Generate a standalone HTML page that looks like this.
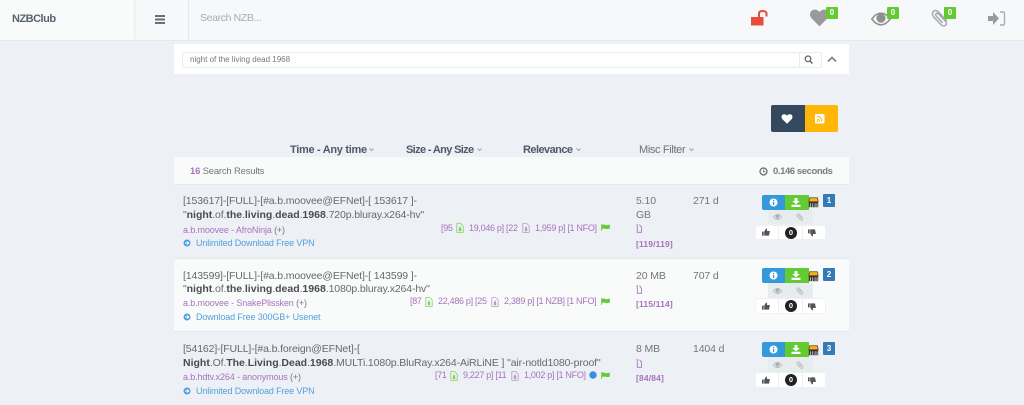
<!DOCTYPE html>
<html><head><meta charset="utf-8"><title>NZBClub</title>
<style>
html,body{margin:0;padding:0}
body{width:1024px;height:405px;overflow:hidden;background:#edf0f4;position:relative;font-family:"Liberation Sans",sans-serif;color:#676a6c;font-size:11px}
.a{position:absolute;white-space:nowrap}
.t{position:absolute;white-space:nowrap;line-height:14px}
.p{color:#a774bd}.b{color:#54a0dc}
.title{font-size:10.500px;letter-spacing:-.13px;color:#676a6c}
.title b{color:#4a4d50;letter-spacing:0}
.sm{font-size:9px;letter-spacing:-.13px}
.st{font-size:9px;letter-spacing:-.3px;color:#a774bd}
.num{font-size:8.500px;font-weight:bold;color:#a774bd;letter-spacing:.15px}
svg{position:absolute;display:block}
.fh{font-size:11px;font-weight:bold;color:#4f5a68;top:143px}
.sep{position:absolute;width:1px;background:#eceef1}
</style></head><body>
<svg width="0" height="0" style="position:absolute"><defs>
<symbol id="heart" viewBox="0 0 24 22"><path d="M12 21.500 2 11.500C-1 8-.5 3.500 2.500 1.500 5.500-.3 9.500.3 12 3.500 14.500.3 18.500-.3 21.500 1.500 24.500 3.500 25 8 22 11.500Z" fill="currentColor"/></symbol>
<symbol id="eye" viewBox="0 0 24 16"><path d="M1 8C5 2.500 9 1 12 1s7 1.500 11 7c-4 5.500-8 7-11 7S5 13.500 1 8Z" fill="none" stroke="currentColor" stroke-width="1.800"/><circle cx="12" cy="7" r="5.500" fill="currentColor"/></symbol>
<symbol id="clip" viewBox="0 0 24 24"><path d="M21 16 10 4C7.500 1.500 4.500 1.500 3 3.500 1.500 5 1.500 8 3.500 10.500L14 21.500C15.500 23 18 23 19.500 21.500 21 20 21 18 19.500 16.500L10 6.500C9 5.500 7.500 5.500 6.800 6.300 6 7 6 8.500 7 9.500L15.500 18.500" fill="none" stroke="currentColor" stroke-width="2"/></symbol>
<symbol id="dl" viewBox="0 0 12 12"><path d="M4 0H8V4H11L6 8.500 1 4H4ZM0 9H12V12H0Z" fill="#fff"/></symbol>
<symbol id="tu" viewBox="0 0 12 11"><path d="M0 5H2.500V11H0ZM3.300 5 6 .5C7.500 0 8 1.500 7.300 4H11C12 4 12 5 11.500 6L10.500 10.500C10.300 11 10 11 9.500 11H3.300Z" fill="currentColor"/></symbol>
<symbol id="file" viewBox="0 0 10 12"><path d="M1 .5H6L9 3.500V11.500H1Z" fill="none" stroke="currentColor" stroke-width="1"/><path d="M3.500 6.500 5 3.500 6.500 6.500V10H3.500Z" fill="currentColor"/></symbol>
<symbol id="flag" viewBox="0 0 11 9"><path d="M0 0H1V9H0ZM1 1C3.500-.3 5.500 2 8 1.500 9 1.300 10 1 11 .5V6C8 7.500 4.500 5 1 6.500Z" fill="#62cb31"/></symbol>
<symbol id="doc" viewBox="0 0 7 10"><path d="M.5.500H1.500V9.500H6.500V3.500L4 .500" fill="none" stroke="#a774bd" stroke-width="1"/></symbol>
<symbol id="box" viewBox="0 0 14 14"><path d="M2 1H12L13 6H1Z" fill="#f6b01e" stroke="#5a4a20" stroke-width="1"/><path d="M1 6H13V13H1Z" fill="#333"/><path d="M3 8V13M6 8V13M9 8V13M11.500 8V13" stroke="#ddd" stroke-width="1"/></symbol>
</defs></svg>

<!-- header -->
<div class="a" style="left:0;top:0;width:1024px;height:40px;background:#f7f8f9;border-bottom:1px solid #e6e8ea"></div>
<div class="a" style="left:0;top:0;width:134px;height:39px;background:#f9fbfb;border-right:1px solid #eceef0"></div>
<div class="a" style="left:188px;top:0;width:1px;height:40px;background:#e6e8ea"></div>
<div class="a" style="left:135px;top:0;width:1px;height:40px;background:#f1f3f4"></div>
<div class="t" style="left:12px;top:12px;font-size:11px;font-weight:bold;color:#5a6270;letter-spacing:-.5px">NZBClub</div>
<svg style="left:155px;top:15px" width="10" height="9"><path d="M0 0H10V2H0ZM0 3.500H10V5.500H0ZM0 7H10V9H0Z" fill="#6b6e72"/></svg>
<div class="t" style="left:200px;top:11px;font-size:10.500px;color:#a9abae;letter-spacing:-.37px">Search NZB...</div>

<svg style="left:750px;top:9px" width="20" height="17"><rect x="1" y="8" width="12.500" height="8.500" fill="#e74c3c"/><path d="M9 8V4.500C9 2.800 10.500 2 12.500 2S16.500 2.800 16.500 4.500V7.500" fill="none" stroke="#e74c3c" stroke-width="2"/></svg>
<svg style="left:810px;top:9px;color:#9a9a9a" width="19" height="18"><use href="#heart"/></svg>
<div class="a" style="left:826px;top:7px;width:12px;height:12px;background:#62cb31;border-radius:1px;color:#fff;font-size:8px;font-weight:bold;line-height:12px;text-align:center">0</div>
<svg style="left:871px;top:12px;color:#8f8f8f" width="20" height="14"><use href="#eye"/></svg>
<div class="a" style="left:887px;top:7px;width:12px;height:12px;background:#62cb31;border-radius:1px;color:#fff;font-size:8px;font-weight:bold;line-height:12px;text-align:center">0</div>
<svg style="left:931px;top:9px;color:#a5a8ab" width="18" height="18"><use href="#clip"/></svg>
<div class="a" style="left:944px;top:7px;width:12px;height:12px;background:#62cb31;border-radius:1px;color:#fff;font-size:8px;font-weight:bold;line-height:12px;text-align:center">0</div>
<svg style="left:988px;top:11px" width="18" height="15"><path d="M0 5H5V1L11 7.500 5 14V10H0Z" fill="#9a9a9a"/><path d="M12 1H15C16.200 1 16.500 2 16.500 3V12C16.500 13 16.200 14 15 14H12" fill="none" stroke="#a9acb0" stroke-width="1.400"/></svg>

<!-- search panel -->
<div class="a" style="left:174px;top:44px;width:675px;height:30px;background:#fff"></div>
<div class="a" style="left:182px;top:52px;width:616px;height:14px;border:1px solid #e9ebed;border-radius:2px;background:#fff"></div>
<div class="t" style="left:190px;top:53px;font-size:8px;color:#777">night of the living dead 1968</div>
<div class="a" style="left:799px;top:52px;width:21px;height:14px;border:1px solid #e9ebed;border-radius:2px;background:#fff"></div>
<svg style="left:804px;top:55px" width="10" height="9"><circle cx="4" cy="3.800" r="2.800" fill="none" stroke="#666" stroke-width="1.300"/><path d="M6 6 8.500 8.500" stroke="#666" stroke-width="1.500"/></svg>
<svg style="left:827px;top:56px" width="10" height="7"><path d="M1 5.500 5 1.500 9 5.500" fill="none" stroke="#888" stroke-width="1.800"/></svg>

<!-- action buttons -->
<div class="a" style="left:771px;top:105px;width:34px;height:27px;background:#34495e;border-radius:2px 0 0 2px"></div>
<div class="a" style="left:805px;top:105px;width:33px;height:27px;background:#ffb606;border-radius:0 2px 2px 0"></div>
<svg style="left:781px;top:114px;color:#fff" width="12" height="10"><use href="#heart"/></svg>
<svg style="left:815px;top:114px" width="10" height="10"><rect width="9.500" height="9.500" rx="1" fill="#fff"/><path d="M2 2.500C5 2.500 7 4.500 7 7.500M2 5C3.500 5 4.600 6 4.600 7.500" fill="none" stroke="#ffb606" stroke-width="1"/><circle cx="2.500" cy="7.200" r=".9" fill="#ffb606"/></svg>

<!-- filters -->
<div class="t fh" style="left:290px;letter-spacing:-.3px">Time - Any time</div>
<div class="t fh" style="left:406px;letter-spacing:-.65px">Size - Any Size</div>
<div class="t fh" style="left:523px;letter-spacing:-.55px">Relevance</div>
<div class="t" style="left:639px;top:143px;font-size:11px;color:#6e7278;letter-spacing:-.35px">Misc Filter</div>
<svg style="left:369px;top:148px" width="5" height="3"><path d="M.5.500 2.500 2.500 4.500.500" fill="none" stroke="#889" stroke-width=".8"/></svg>
<svg style="left:477px;top:148px" width="5" height="3"><path d="M.5.500 2.500 2.500 4.500.500" fill="none" stroke="#889" stroke-width=".8"/></svg>
<svg style="left:576px;top:148px" width="5" height="3"><path d="M.5.500 2.500 2.500 4.500.500" fill="none" stroke="#889" stroke-width=".8"/></svg>
<svg style="left:689px;top:148px" width="5" height="3"><path d="M.5.500 2.500 2.500 4.500.500" fill="none" stroke="#889" stroke-width=".8"/></svg>

<!-- results header -->
<div class="a" style="left:174px;top:157px;width:675px;height:28px;background:#f9fafa;border-bottom:1px solid #e6e8ea;box-sizing:border-box"></div>
<div class="t" style="left:190px;top:165px;font-size:9.500px;color:#777;letter-spacing:-.2px"><b style="color:#a774bd">16</b> Search Results</div>
<svg style="left:759px;top:167px" width="9" height="9"><circle cx="4.500" cy="4.500" r="3.500" fill="none" stroke="#666" stroke-width="1.200"/><path d="M4.500 2.500V4.800H6.500" fill="none" stroke="#666" stroke-width=".8"/></svg>
<div class="t" style="left:773px;top:165px;font-size:9.500px;font-weight:bold;color:#7a7d80;letter-spacing:-.42px">0.146 seconds</div>

<!-- rows -->
<div class="a" style="left:174px;top:185px;width:675px;height:74px;background:#edf0f4;border-bottom:1px solid #e4e6e9;box-sizing:border-box"></div>
<div class="a" style="left:174px;top:259px;width:675px;height:73px;background:#f9fafa;border-bottom:1px solid #e4e6e9;box-sizing:border-box"></div>
<div class="a" style="left:174px;top:332px;width:675px;height:73px;background:#edf0f4"></div>

<!-- row 1 -->
<div class="t title" style="left:183px;top:194px">[153617]-[FULL]-[#a.b.moovee@EFNet]-[ 153617 ]-</div>
<div class="t title" style="left:183px;top:208px">"<b>night</b>.of.<b>the</b>.<b>living</b>.<b>dead</b>.<b>1968</b>.720p.bluray.x264-hv"</div>
<div class="t sm p" style="left:183px;top:223px">a.b.moovee - AfroNinja <span style="color:#777">(+)</span></div>
<svg style="left:183px;top:239px" width="8" height="8"><circle cx="4" cy="4" r="3.500" fill="#54a0dc"/><path d="M2 4H5.500M4 2.500 5.800 4 4 5.500" fill="none" stroke="#fff" stroke-width="1"/></svg>
<div class="t sm b" style="left:196px;top:236px">Unlimited Download Free VPN</div>
<div class="t st" style="left:441px;top:221px">[95</div>
<svg style="left:456px;top:223px;color:#7fd35c" width="8" height="10"><use href="#file"/></svg>
<div class="t st" style="left:469px;top:221px">19,046 p] [22</div>
<svg style="left:522px;top:223px;color:#b79ac6" width="8" height="10"><use href="#file"/></svg>
<div class="t st" style="left:535px;top:221px">1,959 p] [1 NFO]</div>
<svg style="left:601px;top:224px" width="9" height="7"><use href="#flag"/></svg>
<div class="t title" style="left:636px;top:194px;color:#777">5.10</div>
<div class="t title" style="left:636px;top:208px;color:#777">GB</div>
<svg style="left:636px;top:224px" width="6" height="9"><use href="#doc"/></svg>
<div class="t num" style="left:636px;top:237px">[119/119]</div>
<div class="t title" style="left:693px;top:194px;color:#777">271 d</div>
<!-- controls 1 -->
<div class="a" style="left:762px;top:195px;width:23px;height:15px;background:#3498db;border-radius:2px 0 0 2px"></div>
<div class="a" style="left:785px;top:195px;width:24px;height:15px;background:#62cb31"></div>
<svg style="left:769px;top:198px" width="9" height="9"><circle cx="4.500" cy="4.500" r="4" fill="#fff"/><rect x="3.900" y="3.700" width="1.300" height="3.300" fill="#3498db"/><rect x="3.900" y="1.800" width="1.300" height="1.200" fill="#3498db"/></svg>
<svg style="left:791px;top:198px" width="10" height="9"><use href="#dl"/></svg>
<svg style="left:808px;top:196px" width="11" height="13"><use href="#box"/></svg>
<div class="a" style="left:823px;top:194px;width:12px;height:13px;background:#337ab7;border-radius:1px;color:#fff;font-size:8px;font-weight:bold;line-height:13px;text-align:center">1</div>
<div class="a" style="left:768px;top:210px;width:45px;height:14px;background:#e7ecef"></div>
<svg style="left:773px;top:214px;color:#b0b3b6" width="9" height="6"><use href="#eye"/></svg>
<svg style="left:796px;top:213px;color:#b5b8bb" width="8" height="8"><use href="#clip"/></svg>
<div class="a" style="left:756px;top:226px;width:69px;height:13px;background:#fff;border-radius:2px"></div>
<div class="sep" style="left:778px;top:226px;height:13px"></div><div class="sep" style="left:802px;top:226px;height:13px"></div>
<svg style="left:762px;top:228px;color:#555" width="8" height="8"><use href="#tu"/></svg>
<div class="a" style="left:785px;top:227px;width:12px;height:12px;background:#222;border-radius:50%;color:#fff;font-size:7.500px;font-weight:bold;line-height:12px;text-align:center">0</div>
<svg style="left:808px;top:229px;color:#555;transform:scale(1,-1)" width="8" height="8"><use href="#tu"/></svg>

<!-- row 2 -->
<div class="t title" style="left:183px;top:269px">[143599]-[FULL]-[#a.b.moovee@EFNet]-[ 143599 ]-</div>
<div class="t title" style="left:183px;top:282px">"<b>night</b>.of.<b>the</b>.<b>living</b>.<b>dead</b>.<b>1968</b>.1080p.bluray.x264-hv"</div>
<div class="t sm p" style="left:183px;top:296px">a.b.moovee - SnakePlissken <span style="color:#777">(+)</span></div>
<svg style="left:183px;top:313px" width="8" height="8"><circle cx="4" cy="4" r="3.500" fill="#54a0dc"/><path d="M2 4H5.500M4 2.500 5.800 4 4 5.500" fill="none" stroke="#fff" stroke-width="1"/></svg>
<div class="t sm b" style="left:196px;top:310px">Download Free 300GB+ Usenet</div>
<div class="t st" style="left:410px;top:294px">[87</div>
<svg style="left:425px;top:297px;color:#7fd35c" width="8" height="10"><use href="#file"/></svg>
<div class="t st" style="left:438px;top:294px">22,486 p] [25</div>
<svg style="left:491px;top:297px;color:#b79ac6" width="8" height="10"><use href="#file"/></svg>
<div class="t st" style="left:504px;top:294px">2,389 p] [1 NZB] [1 NFO]</div>
<svg style="left:601px;top:298px" width="9" height="7"><use href="#flag"/></svg>
<div class="t title" style="left:636px;top:269px;color:#777">20 MB</div>
<svg style="left:636px;top:285px" width="6" height="9"><use href="#doc"/></svg>
<div class="t num" style="left:636px;top:297px">[115/114]</div>
<div class="t title" style="left:693px;top:269px;color:#777">707 d</div>
<!-- controls 2 -->
<div class="a" style="left:762px;top:268px;width:23px;height:15px;background:#3498db;border-radius:2px 0 0 2px"></div>
<div class="a" style="left:785px;top:268px;width:24px;height:15px;background:#62cb31"></div>
<svg style="left:769px;top:271px" width="9" height="9"><circle cx="4.500" cy="4.500" r="4" fill="#fff"/><rect x="3.900" y="3.700" width="1.300" height="3.300" fill="#3498db"/><rect x="3.900" y="1.800" width="1.300" height="1.200" fill="#3498db"/></svg>
<svg style="left:791px;top:271px" width="10" height="9"><use href="#dl"/></svg>
<svg style="left:808px;top:270px" width="11" height="13"><use href="#box"/></svg>
<div class="a" style="left:823px;top:268px;width:12px;height:13px;background:#337ab7;border-radius:1px;color:#fff;font-size:8px;font-weight:bold;line-height:13px;text-align:center">2</div>
<div class="a" style="left:768px;top:283px;width:45px;height:15px;background:#e7ecef"></div>
<svg style="left:773px;top:288px;color:#b0b3b6" width="9" height="6"><use href="#eye"/></svg>
<svg style="left:796px;top:287px;color:#b5b8bb" width="8" height="8"><use href="#clip"/></svg>
<div class="a" style="left:756px;top:299px;width:69px;height:14px;background:#fff;border-radius:2px;box-shadow:0 0 0 1px #f0f1f2"></div>
<div class="sep" style="left:778px;top:299px;height:14px"></div><div class="sep" style="left:802px;top:299px;height:14px"></div>
<svg style="left:762px;top:302px;color:#555" width="8" height="8"><use href="#tu"/></svg>
<div class="a" style="left:785px;top:300px;width:12px;height:12px;background:#222;border-radius:50%;color:#fff;font-size:7.500px;font-weight:bold;line-height:12px;text-align:center">0</div>
<svg style="left:808px;top:303px;color:#555;transform:scale(1,-1)" width="8" height="8"><use href="#tu"/></svg>

<!-- row 3 -->
<div class="t title" style="left:183px;top:342px">[54162]-[FULL]-[#a.b.foreign@EFNet]-[</div>
<div class="t title" style="left:183px;top:356px"><b>Night</b>.Of.<b>The</b>.<b>Living</b>.<b>Dead</b>.<b>1968</b>.MULTi.1080p.BluRay.x264-AiRLiNE ] "air-notld1080-proof"</div>
<div class="t sm p" style="left:183px;top:370px">a.b.hdtv.x264 - anonymous <span style="color:#777">(+)</span></div>
<svg style="left:183px;top:387px" width="8" height="8"><circle cx="4" cy="4" r="3.500" fill="#54a0dc"/><path d="M2 4H5.500M4 2.500 5.800 4 4 5.500" fill="none" stroke="#fff" stroke-width="1"/></svg>
<div class="t sm b" style="left:196px;top:384px">Unlimited Download Free VPN</div>
<div class="t st" style="left:435px;top:368px">[71</div>
<svg style="left:450px;top:371px;color:#7fd35c" width="8" height="10"><use href="#file"/></svg>
<div class="t st" style="left:463px;top:368px">9,227 p] [11</div>
<svg style="left:511px;top:371px;color:#b79ac6" width="8" height="10"><use href="#file"/></svg>
<div class="t st" style="left:524px;top:368px">1,002 p] [1 NFO]</div>
<svg style="left:589px;top:371px" width="8" height="8"><circle cx="4" cy="4" r="3.700" fill="#3a8fdc"/></svg>
<svg style="left:601px;top:372px" width="9" height="7"><use href="#flag"/></svg>
<div class="t title" style="left:636px;top:342px;color:#777">8 MB</div>
<svg style="left:636px;top:359px" width="6" height="9"><use href="#doc"/></svg>
<div class="t num" style="left:636px;top:371px">[84/84]</div>
<div class="t title" style="left:693px;top:342px;color:#777">1404 d</div>
<!-- controls 3 -->
<div class="a" style="left:762px;top:342px;width:23px;height:15px;background:#3498db;border-radius:2px 0 0 2px"></div>
<div class="a" style="left:785px;top:342px;width:24px;height:15px;background:#62cb31"></div>
<svg style="left:769px;top:345px" width="9" height="9"><circle cx="4.500" cy="4.500" r="4" fill="#fff"/><rect x="3.900" y="3.700" width="1.300" height="3.300" fill="#3498db"/><rect x="3.900" y="1.800" width="1.300" height="1.200" fill="#3498db"/></svg>
<svg style="left:791px;top:345px" width="10" height="9"><use href="#dl"/></svg>
<svg style="left:808px;top:344px" width="11" height="13"><use href="#box"/></svg>
<div class="a" style="left:823px;top:342px;width:12px;height:13px;background:#337ab7;border-radius:1px;color:#fff;font-size:8px;font-weight:bold;line-height:13px;text-align:center">3</div>
<div class="a" style="left:768px;top:357px;width:45px;height:15px;background:#e7ecef"></div>
<svg style="left:773px;top:362px;color:#b0b3b6" width="9" height="6"><use href="#eye"/></svg>
<svg style="left:796px;top:361px;color:#b5b8bb" width="8" height="8"><use href="#clip"/></svg>
<div class="a" style="left:756px;top:373px;width:69px;height:14px;background:#fff;border-radius:2px"></div>
<div class="sep" style="left:778px;top:373px;height:14px"></div><div class="sep" style="left:802px;top:373px;height:14px"></div>
<svg style="left:762px;top:376px;color:#555" width="8" height="8"><use href="#tu"/></svg>
<div class="a" style="left:785px;top:374px;width:12px;height:12px;background:#222;border-radius:50%;color:#fff;font-size:7.500px;font-weight:bold;line-height:12px;text-align:center">0</div>
<svg style="left:808px;top:377px;color:#555;transform:scale(1,-1)" width="8" height="8"><use href="#tu"/></svg>
</body></html>
